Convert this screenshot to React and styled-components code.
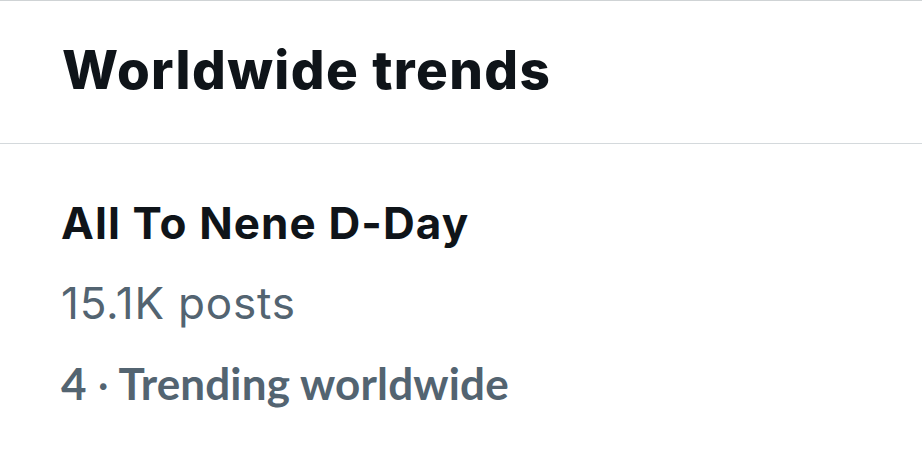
import React from "react";
import styled, { createGlobalStyle } from "styled-components";

const Global = createGlobalStyle`
  html, body { margin: 0; padding: 0; background: #ffffff; }
  body { font-family: Inter, "Noto Sans", sans-serif; -webkit-font-smoothing: antialiased; }
`;

const Panel = styled.section`
  width: 922px;
  height: 461px;
  background: #ffffff;
  border-top: 1px solid #cfd3d5;
  box-sizing: border-box;
  overflow: hidden;
`;

const Header = styled.header`
  height: 143px;
  box-sizing: border-box;
  padding: 39px 0 0 62px;
  border-bottom: 1px solid #d4d9dc;
`;

const Title = styled.h2`
  margin: 0;
  font-size: 53px;
  line-height: 60px;
  font-weight: 800;
  color: #0f1419;
  letter-spacing: 1.4px;
`;

const Trend = styled.article`
  padding: 39px 0 0 61px;
  display: flex;
  flex-direction: column;
`;

const Line = styled.div`
  font-family: ${p => p.$font || "Inter"}, "Noto Sans", sans-serif;
  font-size: 44px;
  line-height: 80px;
  font-weight: ${p => p.$weight};
  color: ${p => p.$color};
  letter-spacing: ${p => p.$ls || "0"};
  white-space: nowrap;
`;

const Dot = styled.span`
  font-weight: 400;
`;

export default function App() {
  return (
    <>
      <Global />
      <Panel>
        <Header>
          <Title>Worldwide trends</Title>
        </Header>
        <Trend>
          <Line $weight={700} $color="#0f1419" $ls="1.1px">All To Nene D-Day</Line>
          <Line $weight={400} $color="#536471" $ls="0.8px">15.1K posts</Line>
          <Line $weight={700} $color="#536471" $font="Lato" $ls="0.15px">
            4 <Dot>·</Dot> Trending worldwide
          </Line>
        </Trend>
      </Panel>
    </>
  );
}
